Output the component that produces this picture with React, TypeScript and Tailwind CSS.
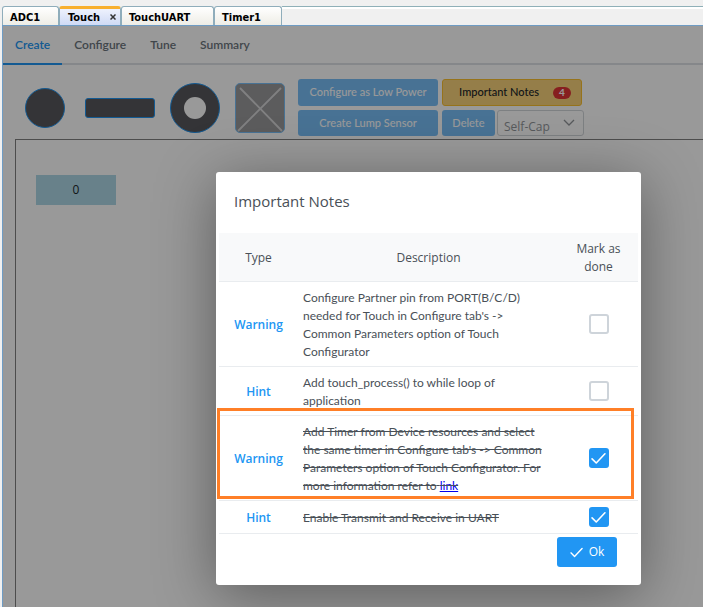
import { useState } from "react";
import type { ReactNode } from "react";

type Note = {
  id: string;
  type: "Warning" | "Hint";
  text: ReactNode;
  done: boolean;
};

const NOTES: Note[] = [
  {
    id: "partner-pin",
    type: "Warning",
    text: (
      <>
        Configure Partner pin from PORT(B/C/D)
        <br />
        needed for Touch in Configure tab's -&gt;
        <br />
        Common Parameters option of Touch
        <br />
        Configurator
      </>
    ),
    done: false,
  },
  {
    id: "touch-process",
    type: "Hint",
    text: (
      <>
        Add touch_process() to while loop of
        <br />
        application
      </>
    ),
    done: false,
  },
  {
    id: "timer",
    type: "Warning",
    text: (
      <>
        Add Timer from Device resources and select
        <br />
        the same timer in Configure tab's -&gt; Common
        <br />
        Parameters option of Touch Configurator. For
        <br />
        more information refer to{" "}
        <a href="#timer" className="text-[#0000ee] underline">
          link
        </a>
      </>
    ),
    done: true,
  },
  {
    id: "uart",
    type: "Hint",
    text: <>Enable Transmit and Receive in UART</>,
    done: true,
  },
];

function Check({ className }: { className: string }) {
  return (
    <svg viewBox="0 0 14 14" className={className} fill="none" stroke="currentColor" aria-hidden="true">
      <path d="M1 7.4 L4.9 11.2 L13 2.6" strokeWidth="1.5" strokeLinecap="round" strokeLinejoin="round" />
    </svg>
  );
}

function FileTab({ label, width }: { label: string; width: string }) {
  return (
    <button
      type="button"
      className={`${width} h-[19px] rounded-t-[3px] border border-b-0 border-[#8fadbb] bg-linear-to-b from-white to-[#eeede6] pt-[3px] pl-[7px] text-left`}
    >
      {label}
    </button>
  );
}

function FileTabs() {
  return (
    <div className="flex h-[25px] items-end bg-[#f0f0f0] pl-[2px] font-['DejaVu_Sans_Condensed','DejaVu_Sans',sans-serif] text-[11px] leading-[15px] font-bold text-black">
      <FileTab label="ADC1" width="w-[57px]" />
      <button
        type="button"
        className="flex h-[19px] w-[62px] items-center justify-between rounded-t-[3px] border border-t-3 border-b-0 border-[#8fadbb] border-t-[#f8b02e] bg-linear-to-b from-[#eef2fd] to-[#cfdaf5] pr-1 pl-2"
      >
        Touch
        <svg viewBox="0 0 6 6" className="size-[6px]" stroke="#333" strokeWidth="1.5" aria-hidden="true">
          <path d="M0.5 0.5 L5.5 5.5 M5.5 0.5 L0.5 5.5" />
        </svg>
      </button>
      <FileTab label="TouchUART" width="w-[93px]" />
      <FileTab label="Timer1" width="w-[68px]" />
      <div className="h-[19px] flex-1 border-t border-[#8fb0b8] bg-[#f0f0f0]">
        <div className="h-[2px] bg-white" />
      </div>
    </div>
  );
}

function PageNav() {
  const item = "-mb-[2px] h-[39px] border-b-2 px-3";
  return (
    <nav className="flex border-b-2 border-[#dee2e6] font-['Lato','Open_Sans',sans-serif] text-[12px] font-semibold text-[#6c757d]">
      <button type="button" className={`${item} border-[#2196f3] text-[#2196f3]`}>
        Create
      </button>
      {["Configure", "Tune", "Summary"].map((label) => (
        <button key={label} type="button" className={`${item} border-transparent`}>
          {label}
        </button>
      ))}
    </nav>
  );
}

function Toolbar() {
  const blue = "rounded-[3px] bg-[#2196f3] text-white opacity-60";
  return (
    <div className="flex items-center pt-[14px] pl-[22px] font-['Lato','Open_Sans',sans-serif] text-[11px] font-medium">
      <button type="button" aria-label="Button" className="size-10 rounded-full border border-[#2196f3] bg-[#58585c]" />
      <button type="button" aria-label="Slider" className="ml-5 h-5 w-[70px] rounded-[3px] border border-[#2196f3] bg-[#58585c]" />
      <button
        type="button"
        aria-label="Wheel"
        className="ml-[15px] flex size-[50px] items-center justify-center rounded-full border border-[#2196f3] bg-[#58585c]"
      >
        <span className="size-[22px] rounded-full bg-white" />
      </button>
      <button
        type="button"
        aria-label="Surface"
        className="ml-[15px] size-[50px] rounded-[5px] border border-[#2196f3] bg-[#58585c] opacity-60"
      >
        <svg viewBox="0 0 48 48" className="size-12" stroke="white" strokeWidth="1.8" opacity="0.6" aria-hidden="true">
          <path d="M4 4 L46 47 M45 4 L2 47" />
        </svg>
      </button>
      <div className="ml-[13px] flex flex-col gap-1">
        <div className="flex gap-1">
          <button type="button" disabled className={`${blue} h-[27px] w-[140px]`}>
            Configure as Low Power
          </button>
          <button
            type="button"
            className="flex h-[27px] w-[140px] items-center justify-end gap-[14px] rounded-[3px] border border-[#fbc02d] bg-[#f8d27b] pr-[10px] text-[#212529]"
          >
            Important Notes
            <span className="flex h-3 w-[18px] items-center justify-center rounded-full bg-[#e03535] text-[10px] font-bold text-white">
              4
            </span>
          </button>
        </div>
        <div className="flex h-[26px]">
          <button type="button" disabled className={`${blue} w-[140px]`}>
            Create Lump Sensor
          </button>
          <button type="button" disabled className={`${blue} ml-1 w-[53px]`}>
            Delete
          </button>
          <div className="relative ml-[2px] w-[87px] opacity-60">
            <select
              aria-label="Sensing technology"
              disabled
              className="size-full appearance-none rounded-[3px] border border-[#b4bac0] bg-white pt-[7px] pl-[6px] font-['Open_Sans','Noto_Sans',sans-serif] text-[12px] leading-[17px] font-normal text-[#495057]"
            >
              <option>Self-Cap</option>
            </select>
            <svg
              viewBox="0 0 12 7"
              className="pointer-events-none absolute top-[9px] right-[9px] h-[7px] w-3"
              fill="none"
              stroke="#495057"
              strokeWidth="1.3"
              aria-hidden="true"
            >
              <path d="M1 1 L6 6 L11 1" />
            </svg>
          </div>
        </div>
      </div>
    </div>
  );
}

function NotesDialog() {
  const [notes, setNotes] = useState(NOTES);
  const toggle = (id: string) =>
    setNotes((all) => all.map((n) => (n.id === id ? { ...n, done: !n.done } : n)));

  return (
    <section
      role="dialog"
      aria-labelledby="notes-title"
      className="relative w-[425px] rounded-[3px] bg-white px-[3px] pb-[18px] text-[#495057] shadow-[0_10px_60px_rgba(0,0,0,0.4)]"
    >
      <h2 id="notes-title" className="px-[15px] pt-[17px] pb-5 text-[15px] leading-6 font-normal">
        Important Notes
      </h2>
      <table className="w-full table-fixed border-collapse text-[12px] leading-[18px]">
        <thead className="bg-[#f8f9fa]">
          <tr className="border-b border-[#e9ecef]">
            <th className="w-[79px] pt-[7px] pb-[5px] font-medium">Type</th>
            <th className="pt-[7px] pb-[5px] font-medium">Description</th>
            <th className="w-[79px] pt-[7px] pb-[5px] font-medium">
              Mark as
              <br />
              done
            </th>
          </tr>
        </thead>
        <tbody>
          {notes.map((note) => (
            <tr key={note.id} className="border-b border-[#e9ecef]">
              <td className="pt-[7px] pb-[5px] text-center font-semibold text-[#2196f3]">{note.type}</td>
              <td
                className={`pt-[7px] pb-[5px] pl-[5px] font-['Lato','Open_Sans',sans-serif] whitespace-nowrap ${note.done ? "line-through" : ""}`}
              >
                {note.text}
              </td>
              <td className="py-[6px]">
                <div className="grid place-items-center text-white">
                  <input
                    type="checkbox"
                    aria-label={`Mark ${note.type} as done`}
                    checked={note.done}
                    onChange={() => toggle(note.id)}
                    className="col-start-1 row-start-1 size-5 appearance-none rounded-[3px] border-2 border-[#ced4da] bg-white checked:border-[#2196f3] checked:bg-[#2196f3]"
                  />
                  {note.done && <Check className="pointer-events-none col-start-1 row-start-1 size-[15px]" />}
                </div>
              </td>
            </tr>
          ))}
        </tbody>
      </table>
      <div className="flex justify-end pt-[3px] pr-[21px]">
        <button
          type="button"
          className="flex h-[30px] w-[60px] items-center justify-center gap-[6px] rounded-[3px] bg-[#2196f3] text-[12px] font-medium text-white"
        >
          <Check className="size-[13px]" />
          Ok
        </button>
      </div>
      <div className="pointer-events-none absolute top-[236px] right-[7px] left-px h-[91px] border-3 border-[#ff7f27]" />
    </section>
  );
}

export default function App() {
  return (
    <div className="flex min-h-screen flex-col bg-[#f0f0f0] font-['Open_Sans','Noto_Sans',sans-serif]">
      <FileTabs />
      <main className="relative ml-[2px] flex flex-1 flex-col overflow-hidden border-t border-l border-[#6f9cc4] bg-[#999]">
        <div className="flex flex-1 flex-col bg-white">
          <PageNav />
          <Toolbar />
          <div className="mt-[3px] ml-3 flex-1 border-t border-l border-[#808080] pt-[35px] pl-5">
            <div className="flex h-[30px] w-20 items-center justify-center bg-[#add8e6] text-[12px] text-[#212529]">0</div>
          </div>
        </div>
        <div className="absolute inset-0 flex items-start justify-end bg-black/40 pt-[146px] pr-[62px]">
          <NotesDialog />
        </div>
      </main>
    </div>
  );
}
